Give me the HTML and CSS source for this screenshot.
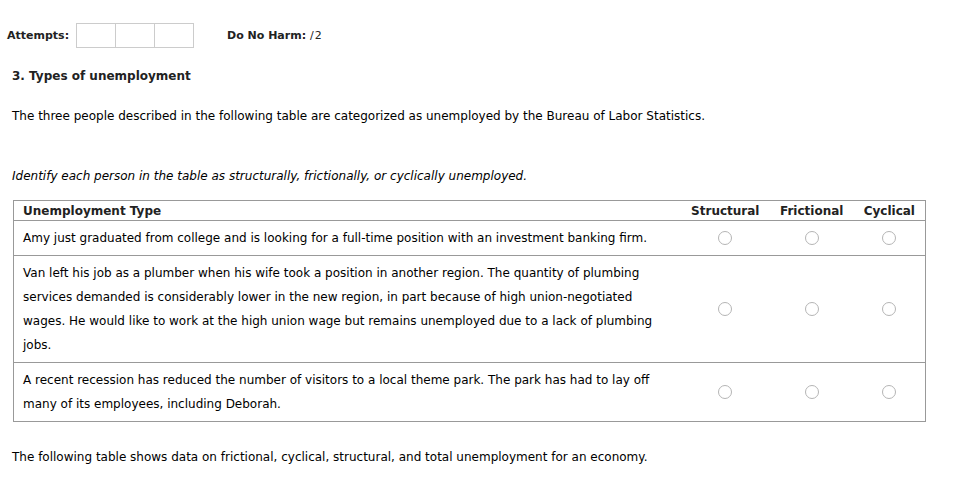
FILE: index.html
```html
<!DOCTYPE html>
<html>
<head>
<meta charset="utf-8">
<link rel="stylesheet" href="styles.css">
</head>
<body>
<div class="topbar">
  <span class="label">Attempts:</span>
  <div class="boxes"><span class="box"></span><span class="box"></span><span class="box"></span></div>
  <span class="label harm">Do No Harm:</span>
  <span class="score">/&#8202;2</span>
</div>
<div class="content">
  <h3 class="title">3. Types of unemployment</h3>
  <p class="intro">The three people described in the following table are categorized as unemployed by the Bureau of Labor Statistics.</p>
  <p class="instr">Identify each person in the table as structurally, frictionally, or cyclically unemployed.</p>
  <table class="grid">
    <colgroup><col class="c-desc"><col class="c-s"><col class="c-f"><col class="c-c"></colgroup>
    <thead>
      <tr><th class="th-left">Unemployment Type</th><th>Structural</th><th>Frictional</th><th>Cyclical</th></tr>
    </thead>
    <tbody>
      <tr><td class="desc">Amy just graduated from college and is looking for a full-time position with an investment banking firm.</td><td class="rc"><span class="radio"></span></td><td class="rc"><span class="radio"></span></td><td class="rc"><span class="radio"></span></td></tr>
      <tr><td class="desc">Van left his job as a plumber when his wife took a position in another region. The quantity of plumbing services demanded is considerably lower in the new region, in part because of high union-negotiated wages. He would like to work at the high union wage but remains unemployed due to a lack of plumbing jobs.</td><td class="rc"><span class="radio"></span></td><td class="rc"><span class="radio"></span></td><td class="rc"><span class="radio"></span></td></tr>
      <tr><td class="desc">A recent recession has reduced the number of visitors to a local theme park. The park has had to lay off many of its employees, including Deborah.</td><td class="rc"><span class="radio"></span></td><td class="rc"><span class="radio"></span></td><td class="rc"><span class="radio"></span></td></tr>
    </tbody>
  </table>
  <p class="outro">The following table shows data on frictional, cyclical, structural, and total unemployment for an economy.</p>
</div>
</body>
</html>
```
FILE: styles.css
```css
html, body { margin: 0; padding: 0; background: #fff; }
body {
  font-family: "DejaVu Sans", Verdana, sans-serif;
  font-size: 12px;
  color: #000;
}
.topbar {
  display: flex;
  align-items: center;
  padding: 23px 0 0 7px;
  height: 25px;
}
.label { font-weight: bold; font-size: 11px; color: #222; }
.boxes { display: flex; margin-left: 7px; }
.box {
  width: 38px; height: 23px;
  border: 1px solid #ccc;
  display: block;
}
.box + .box { margin-left: -1px; }
.harm { margin-left: 33px; }
.score { margin-left: 4px; font-size: 11px; color: #222; }
.content { padding: 0 0 0 12px; }
.title {
  margin: 20px 0 0 0;
  font-size: 12px;
  font-weight: bold;
  line-height: 16px;
  color: #222;
}
.intro { margin: 24px 0 0 0; line-height: 16px; }
.instr { margin: 44px 0 0 0; line-height: 16px; font-style: italic; }
.grid {
  margin: 16px 0 0 1px;
  border-collapse: collapse;
  border: 1px solid #999;
  width: 913px;
}
.c-desc { width: 660px; }
.c-s { width: 88px; }
.c-f { width: 83px; }
.c-c { width: 71px; }
.grid th {
  font-size: 12px;
  font-weight: bold;
  height: 19px;
  padding: 0;
  text-align: center;
  border-bottom: 1px solid #999;
  color: #222;
}
.grid th.th-left { text-align: left; padding-left: 9px; }
.grid td { border-bottom: 1px solid #999; padding: 0; }
.grid td.desc {
  padding: 5px 16px 5px 9px;
  line-height: 24px;
}
.rc { text-align: center; vertical-align: middle; }
.radio {
  display: inline-block;
  width: 12px; height: 12px;
  border: 1px solid #b5b5b5;
  border-radius: 50%;
  vertical-align: middle;
}
.outro { margin: 27px 0 0 0; line-height: 16px; }
```
